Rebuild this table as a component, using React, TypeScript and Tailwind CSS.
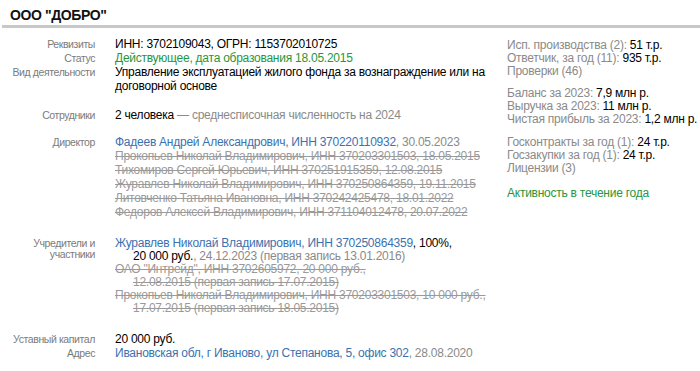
import React from "react";

const BLUE = "text-[#3a72b0]";
const GRAY = "text-[#8a8a8a]";

function Row({
  label,
  children,
  className = "",
  labelClass = "",
}: {
  label: React.ReactNode;
  children: React.ReactNode;
  className?: string;
  labelClass?: string;
}) {
  return (
    <div className={`flex items-start ${className}`}>
      <div
        className={`w-[95px] shrink-0 text-right text-[10.5px] tracking-[-0.4px] text-[#7b7b7b] ${labelClass}`}
      >
        {label}
      </div>
      <div className="ml-[20px] w-[385px]">{children}</div>
    </div>
  );
}

const oldDirectors = [
  "Прокопьев Николай Владимирович, ИНН 370203301503, 18.05.2015",
  "Тихомиров Сергей Юрьевич, ИНН 370251915359, 12.08.2015",
  "Журавлев Николай Владимирович, ИНН 370250864359, 19.11.2015",
  "Литовченко Татьяна Ивановна, ИНН 370242425478, 18.01.2022",
  "Федоров Алексей Владимирович, ИНН 371104012478, 20.07.2022",
];

const oldFounders = [
  {
    first: 'ОАО "Интрейд", ИНН 3702605972, 20 000 руб.,',
    second: "12.08.2015 (первая запись 17.07.2015)",
  },
  {
    first: "Прокопьев Николай Владимирович, ИНН 370203301503, 10 000 руб.,",
    second: "17.07.2015 (первая запись 18.05.2015)",
  },
];

function Stat({ label, value }: { label: string; value?: string }) {
  return (
    <div>
      <span className={GRAY}>{label}</span>
      {value && <span className="text-black">{value}</span>}
    </div>
  );
}

export default function App() {
  return (
    <div className="w-[700px] h-[371px] overflow-hidden bg-white font-['Liberation_Sans',Arial,sans-serif] text-[12px] tracking-[-0.25px] text-black">
      <h1 className="h-[25px] pl-[10px] pt-[7px] text-[14px] font-bold leading-[17px] tracking-[-0.4px] text-[#111]">
        ООО "ДОБРО"
      </h1>
      <div className="ml-[2px] h-[3px] bg-[#c8c8c8]" />

      <div className="flex">
        {/* main column */}
        <div className="w-[500px] shrink-0 leading-[14px]">
          <div className="mt-[9px]">
            <Row label="Реквизиты">ИНН: 3702109043, ОГРН: 1153702010725</Row>
            <Row label="Статус">
              <span className="text-[#27963c]">
                Действующее, дата образования 18.05.2015
              </span>
            </Row>
            <Row label="Вид деятельности">
              Управление эксплуатацией жилого фонда за вознаграждение или на
              договорной основе
            </Row>
          </div>

          <Row label="Сотрудники" className="mt-[15px]">
            2 человека{" "}
            <span className={GRAY}>— среднесписочная численность на 2024</span>
          </Row>

          <Row label="Директор" className="mt-[13px]">
            <div>
              <span className={BLUE}>
                Фадеев Андрей Александрович, ИНН 370220110932
              </span>
              <span className={GRAY}>, 30.05.2023</span>
            </div>
            {oldDirectors.map((d) => (
              <div key={d} className="whitespace-nowrap text-[#9a9a9a] line-through">
                {d}
              </div>
            ))}
          </Row>

          <Row
            label={
              <>
                Учредители и
                <br />
                участники
              </>
            }
            className="mt-[18px] leading-[13px]"
            labelClass="leading-[11px] pt-[1px]"
          >
            <div className="whitespace-nowrap">
              <span className={BLUE}>
                Журавлев Николай Владимирович, ИНН 370250864359
              </span>
              , 100%,
            </div>
            <div className="pl-[18px]">
              20 000 руб.
              <span className={GRAY}>, 24.12.2023 (первая запись 13.01.2016)</span>
            </div>
            {oldFounders.map((f) => (
              <div key={f.first} className="whitespace-nowrap text-[#9a9a9a]">
                <div>
                  <span className="line-through">{f.first}</span>
                </div>
                <div className="pl-[18px]">
                  <span className="line-through">{f.second}</span>
                </div>
              </div>
            ))}
          </Row>

          <div className="mt-[17px]">
            <Row label="Уставный капитал">20 000 руб.</Row>
            <Row label="Адрес">
              <span className={BLUE}>
                Ивановская обл, г Иваново, ул Степанова, 5, офис 302
              </span>
              <span className={GRAY}>, 28.08.2020</span>
            </Row>
          </div>
        </div>

        {/* side column */}
        <div className="ml-[7px] whitespace-nowrap pt-[10.5px] leading-[13px]">
          <Stat label="Исп. производства (2): " value="51 т.р." />
          <Stat label="Ответчик, за год (11): " value="935 т.р." />
          <Stat label="Проверки (46)" />

          <div className="mt-[9px]">
            <Stat label="Баланс за 2023: " value="7,9 млн р." />
            <Stat label="Выручка за 2023: " value="11 млн р." />
            <Stat label="Чистая прибыль за 2023: " value="1,2 млн р." />
          </div>

          <div className="mt-[10px]">
            <Stat label="Госконтракты за год (1): " value="24 т.р." />
            <Stat label="Госзакупки за год (1): " value="24 т.р." />
            <Stat label="Лицензии (3)" />
          </div>

          <div className="mt-[12px] text-[#27963c]">Активность в течение года</div>
        </div>
      </div>
    </div>
  );
}
